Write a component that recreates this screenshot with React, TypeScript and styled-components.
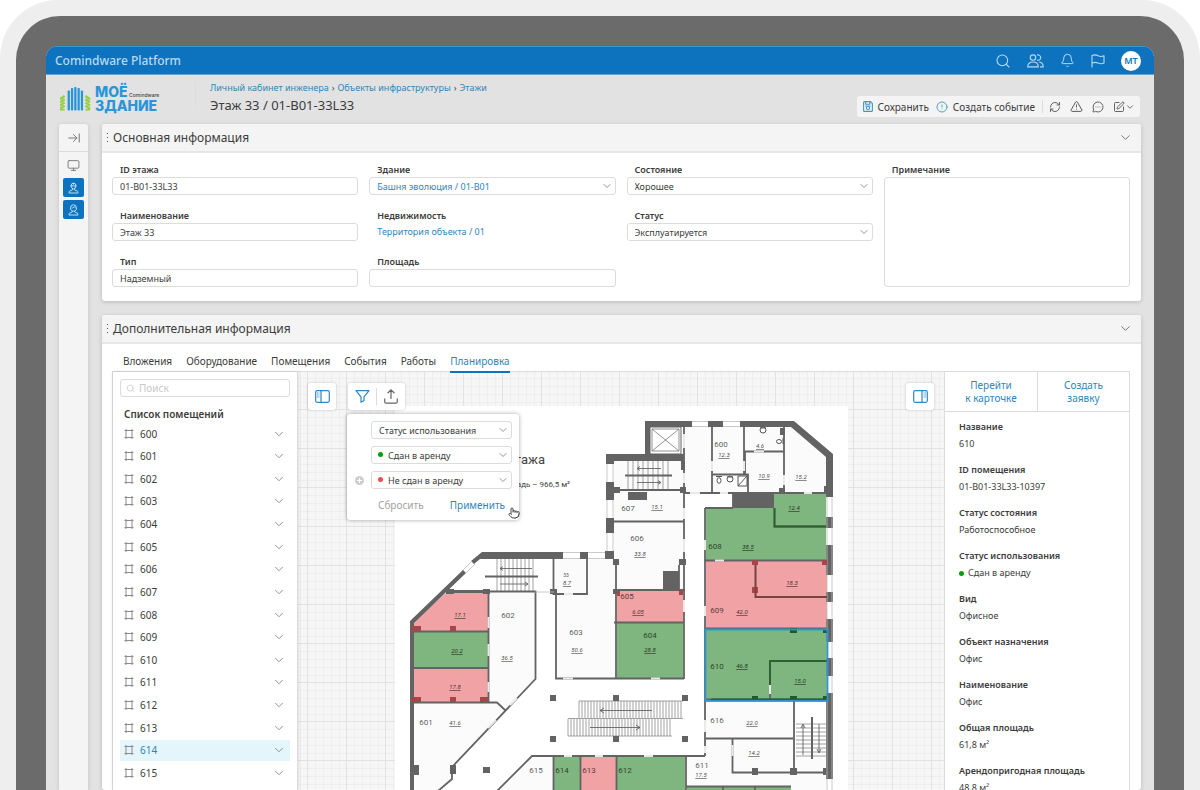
import React from "react";
import styled, { createGlobalStyle, css } from "styled-components";
import {
  Search,
  Bell,
  ArrowRightToLine,
  Monitor,
  RefreshCw,
  TriangleAlert,
  MessageCircleMore,
  SquarePen,
  ChevronDown,
  CircleAlert,
  Pointer,
} from "lucide-react";

const c = {
  brand: "#0d73be",
  link: "#2f86b8",
  text: "#3c3c3c",
  muted: "#a3a3a3",
  line: "#dcdcdc",
  head: "#f4f4f4",
  page: "#e2e2e2",
  green: "#0a9d0a",
  red: "#ee4d4d",
};

const GlobalStyle = createGlobalStyle`
  *, *::before, *::after { box-sizing: border-box; }
  body { margin: 0; background: #fff; color: ${c.text}; font-family: "Noto Sans", "Open Sans", sans-serif; font-size: 9px; }
  button, input, select, textarea { font: inherit; color: inherit; margin: 0; }
  button { border: 0; padding: 0; background: none; cursor: pointer; }
  a { color: ${c.link}; text-decoration: none; }
  h1, h2, h3, p, ul, dl, dd { margin: 0; padding: 0; font-weight: 400; }
  svg { display: block; flex: none; }
`;

/* ---------- device frame ---------- */

const Bezel = styled.div`
  height: 100vh;
  overflow: hidden;
  padding: 16px 16px 0;
  background: #eeeeee;
  border-radius: 58px 58px 0 0;
`;

const Frame = styled.div`
  height: 100%;
  padding: 30px 30px 0;
  background: #6b6b6b;
  border-radius: 44px 44px 0 0;
`;

const Screen = styled.div`
  height: 100%;
  display: flex;
  flex-direction: column;
  overflow: hidden;
  background: ${c.page};
  border-radius: 12px 12px 0 0;
`;

/* ---------- top bars ---------- */

const AppBar = styled.header`
  flex: none;
  height: 29px;
  display: flex;
  align-items: center;
  justify-content: space-between;
  padding: 0 13px 0 9px;
  background: ${c.brand};
  border-top: 1px solid #3b93d0;
  border-bottom: 1px solid #5aa6dc;
  color: #b9d9ef;
`;

const Product = styled.span`
  font-size: 12px;
  font-weight: 500;
`;

const AppActions = styled.nav`
  display: flex;
  align-items: center;
  gap: 16px;
`;

const IconButton = styled.button`
  display: flex;
  align-items: center;
  justify-content: center;
`;

const Avatar = styled.button`
  width: 20px;
  height: 20px;
  border-radius: 50%;
  background: #fff;
  color: ${c.brand};
  font-size: 9px;
  font-weight: 600;
  line-height: 20px;
  text-align: center;
`;

const TitleBar = styled.div`
  flex: none;
  height: 49px;
  display: flex;
  padding: 7px 14px 0;
`;

const LogoBox = styled.a`
  width: 135px;
  height: 32px;
`;

const TitleText = styled.div`
  flex: 1;
  padding-left: 14px;
`;

const Crumbs = styled.nav`
  display: flex;
  gap: 3px;
  line-height: 12px;
`;

const PageTitle = styled.h1`
  margin-top: 1px;
  font-size: 13px;
  line-height: 20px;
`;

const ActionBar = styled.div`
  display: flex;
  align-items: center;
  align-self: flex-start;
  height: 21px;
  margin-top: 14px;
  padding: 0 5px 0 6px;
  background: ${c.head};
  border-radius: 3px;
`;

const ActionButton = styled.button`
  display: flex;
  align-items: center;
  gap: 5px;
  margin-right: 7px;
  font-size: 10px;
`;

const Split = styled.span<{ $h: number }>`
  width: 1px;
  height: ${(p) => p.$h}px;
  background: ${c.line};
`;

const ActionIcons = styled.div`
  display: flex;
  align-items: center;
  gap: 9px;
  padding-left: 6px;
  color: #555;
`;

/* ---------- body ---------- */

const Body = styled.div`
  flex: 1;
  min-height: 0;
  display: flex;
  gap: 14px;
  padding: 0 13px;
`;

const Rail = styled.aside`
  flex: none;
  width: 29px;
  display: flex;
  flex-direction: column;
  align-items: center;
  background: ${c.head};
  border-radius: 3px 3px 0 0;
  box-shadow: 0 1px 4px rgba(0, 0, 0, 0.15);
  color: #777;
`;

const RailTop = styled.button`
  width: 100%;
  height: 28px;
  display: flex;
  align-items: center;
  justify-content: center;
  border-bottom: 1px solid ${c.line};
`;

const RailButton = styled.button<{ $filled?: boolean }>`
  width: 21px;
  height: 19px;
  margin-top: 3px;
  display: flex;
  align-items: center;
  justify-content: center;
  border-radius: 2px;
  ${(p) =>
    p.$filled
      ? css`
          background: ${c.brand};
          color: #d5e9f7;
        `
      : css`
          margin-top: 4px;
        `}
`;

const Main = styled.main`
  flex: 1;
  min-width: 0;
  display: flex;
  flex-direction: column;
  gap: 14px;
`;

const Panel = styled.section<{ $fill?: boolean }>`
  flex: ${(p) => (p.$fill ? "1" : "none")};
  min-height: 0;
  display: flex;
  flex-direction: column;
  background: #fff;
  border-radius: 3px;
  box-shadow: 0 1px 4px rgba(0, 0, 0, 0.18);
`;

const PanelHead = styled.div`
  flex: none;
  height: 29px;
  display: flex;
  align-items: center;
  padding: 0 8px 0 4px;
  background: ${c.head};
  border-bottom: 2px solid #e6e6e6;
  border-radius: 3px 3px 0 0;
`;

const PanelTitle = styled.h2`
  flex: 1;
  margin-left: 4px;
  font-size: 12px;
  line-height: 18px;
`;

const Form = styled.div`
  display: grid;
  grid-template-columns: repeat(4, 1fr);
  grid-template-rows: repeat(3, 32px);
  gap: 14px 11px;
  padding: 10px 11px 14px 10px;
`;

const Field = styled.div<{ $tall?: boolean }>`
  display: flex;
  flex-direction: column;
  ${(p) => p.$tall && css`grid-row: span 3;`}
`;

const Label = styled.label`
  flex: none;
  padding-left: 8px;
  line-height: 14px;
  font-weight: 600;
`;

const boxed = css`
  width: 100%;
  height: 18px;
  padding: 0 7px;
  border: 1px solid ${c.line};
  border-radius: 3px;
  background: #fff;
  outline: none;
`;

const TextInput = styled.input`
  ${boxed}
`;

const TextArea = styled.textarea`
  ${boxed}
  flex: 1;
  resize: none;
`;

const FieldLink = styled.a`
  padding-left: 8px;
  line-height: 18px;
`;

const SelectWrap = styled.span<{ $blue?: boolean }>`
  position: relative;
  display: block;
  flex: 1;
  color: ${(p) => (p.$blue ? c.link : c.text)};
`;

const SelectBox = styled.select<{ $dot?: boolean }>`
  ${boxed}
  display: block;
  appearance: none;
  padding-left: ${(p) => (p.$dot ? 16 : 7)}px;
`;

const SelectArrow = styled(ChevronDown)`
  position: absolute;
  right: 3px;
  top: 3px;
  color: #8a8a8a;
  pointer-events: none;
`;

const SelectDot = styled.i<{ $color: string }>`
  position: absolute;
  left: 7px;
  top: 6px;
  width: 5px;
  height: 5px;
  border-radius: 50%;
  background: ${(p) => p.$color};
`;

/* ---------- tabs and workspace ---------- */

const Tabs = styled.div`
  flex: none;
  height: 29px;
  display: flex;
  gap: 14px;
  padding: 0 21px;
`;

const Tab = styled.button<{ $active?: boolean }>`
  height: 29px;
  padding-top: 6px;
  border-bottom: 2px solid ${(p) => (p.$active ? c.brand : "transparent")};
  color: ${(p) => (p.$active ? c.link : c.text)};
  font-size: 10px;
  position: relative;
  z-index: 1;
`;

const Workspace = styled.div`
  flex: 1;
  min-height: 0;
  display: flex;
  margin: -2px 11px 0 10px;
  border: 1px solid ${c.line};
  border-bottom: 0;
`;

const Rooms = styled.div`
  flex: none;
  width: 185px;
  overflow: hidden;
  padding: 7px 7px 0 7px;
  border-right: 1px solid ${c.line};
  box-shadow: 0 0 4px rgba(0, 0, 0, 0.12);
  z-index: 1;
`;

const SearchBox = styled.label`
  ${boxed}
  display: flex;
  align-items: center;
  gap: 4px;
  padding: 0 5px;
  color: #c9c9c9;
  font-size: 10px;
`;

const SearchInput = styled.input`
  flex: 1;
  min-width: 0;
  border: 0;
  padding: 0;
  outline: none;
  background: none;
  color: ${c.text};
  &::placeholder {
    color: #c9c9c9;
    opacity: 1;
  }
`;

const RoomsTitle = styled.h3`
  margin: 10px 0 2px 4px;
  font-size: 10px;
  line-height: 14px;
  font-weight: 600;
`;

const RoomList = styled.ul`
  height: 362px;
  display: grid;
  grid-template-rows: repeat(16, 1fr);
  list-style: none;
`;

const RoomRow = styled.button<{ $selected?: boolean }>`
  width: 100%;
  height: 21px;
  display: flex;
  align-items: center;
  gap: 6px;
  padding: 0 4px;
  background: ${(p) => (p.$selected ? "#e5f5fc" : "transparent")};
  color: ${(p) => (p.$selected ? c.link : c.text)};
  font-size: 10px;
  text-align: left;
`;

const RoomName = styled.span`
  flex: 1;
`;

const Canvas = styled.div`
  position: relative;
  flex: 1;
  min-width: 0;
  display: flex;
  justify-content: center;
  align-items: flex-start;
  overflow: hidden;
  padding-top: 34px;
  background-color: #f6f6f6;
  background-image: linear-gradient(90deg, #e2e2e2 1px, transparent 1px),
    linear-gradient(#e2e2e2 1px, transparent 1px),
    repeating-linear-gradient(90deg, #eeeeee 0 1px, transparent 1px 8px),
    repeating-linear-gradient(#eeeeee 0 1px, transparent 1px 8px);
  background-size: 39px 39px;
  background-position: 9px 37px;
`;

const Tools = styled.div<{ $side: "left" | "right" }>`
  position: absolute;
  top: 11px;
  ${(p) => p.$side}: 10px;
  display: flex;
  gap: 12px;
`;

const ToolGroup = styled.div`
  height: 27px;
  display: flex;
  align-items: center;
  background: #fff;
  border-radius: 3px;
  box-shadow: 0 0 3px rgba(0, 0, 0, 0.2);
`;

const ToolButton = styled(IconButton)<{ $blue?: boolean }>`
  width: 28px;
  height: 27px;
  color: ${(p) => (p.$blue ? "#2c88c4" : "#666")};
`;

const FilterCard = styled.form`
  position: absolute;
  left: 49px;
  top: 42px;
  width: 172px;
  padding: 7px 7px 6px 8px;
  display: flex;
  flex-direction: column;
  gap: 7px;
  background: #fff;
  border-radius: 3px;
  box-shadow: 0 0 4px rgba(0, 0, 0, 0.35);
`;

const FilterRow = styled.div`
  display: flex;
  align-items: center;
`;

const FilterSlot = styled.div`
  width: 16px;
`;

const AddButton = styled.button`
  width: 9px;
  height: 9px;
  display: flex;
  align-items: center;
  justify-content: center;
  border-radius: 50%;
  background: #cdcdcd;
  color: #fff;
`;

const FilterFoot = styled.div`
  display: flex;
  justify-content: space-between;
  padding: 0 7px 0 23px;
`;

const FilterButton = styled.button<{ $primary?: boolean }>`
  color: ${(p) => (p.$primary ? c.link : c.muted)};
  font-size: 10px;
  line-height: 18px;
`;

const HandCursor = styled(Pointer)`
  position: absolute;
  left: 210px;
  top: 135px;
  fill: #fff;
  color: #444;
`;

const Details = styled.aside`
  flex: none;
  width: 185px;
  overflow: hidden;
  background: #fff;
  border-left: 1px solid ${c.line};
`;

const DetailLinks = styled.div`
  display: grid;
  grid-template-columns: 1fr 1fr;
  height: 40px;
  border-bottom: 1px solid ${c.line};
`;

const DetailLink = styled.a`
  display: flex;
  align-items: center;
  justify-content: center;
  text-align: center;
  font-size: 10px;
  line-height: 13px;
  white-space: pre-line;
  & + & {
    border-left: 1px solid ${c.line};
  }
`;

const DetailList = styled.dl`
  padding: 8px 14px 0;
`;

const DetailItem = styled.div`
  height: 43px;
`;

const DetailTerm = styled.dt`
  line-height: 13px;
  font-weight: 600;
`;

const DetailValue = styled.dd`
  display: flex;
  align-items: center;
  gap: 4px;
  margin-top: 4px;
  line-height: 14px;
`;

const Dot = styled.i<{ $color: string }>`
  width: 5px;
  height: 5px;
  border-radius: 50%;
  background: ${(p) => p.$color};
`;

/* ---------- drawings ---------- */

const Logo = () => (
  <svg width="104" height="32" viewBox="0 0 104 32" aria-label="Моё здание">
    <g fill="#2a95d8">
      {[
        [7.6, 8.4],
        [10.9, 6],
        [14.2, 5],
        [17.5, 6],
        [20.8, 8.4],
      ].map(([x, y]) => (
        <rect key={x} x={x} y={y} width="2.3" height={28.5 - y} rx="0.8" />
      ))}
    </g>
    <g stroke="#93cf45" strokeWidth="2.3">
      {[14.4, 17.6, 20.8, 24].map((y) => (
        <g key={y}>
          <path d={`M0 ${y + 2.8}L4.6 ${y - 0.4}`} />
          <path d={`M30 ${y + 2.8}L25.4 ${y - 0.4}`} />
        </g>
      ))}
      <path d="M0 27.6H4.600M25.400 27.600H30" strokeWidth="1.8" />
    </g>
    <g fill="#2a95d8" fontFamily="Inter, sans-serif" fontWeight="800" fontSize="14">
      <text x="35" y="15">МОЁ</text>
      <text x="35" y="29">ЗДАНИЕ</text>
    </g>
    <text x="69" y="15" fontFamily="Inter, sans-serif" fontSize="5" fontWeight="500" fill="#444">
      Comindware
    </text>
  </svg>
);

const FlagIcon = () => (
  <svg width="14" height="14" viewBox="0 0 14 14" fill="none" stroke="currentColor" strokeWidth="1.1">
    <path d="M1 13.500V1.600C3 .6 5 .7 7 1.700S11 2.700 13 1.700V9C11 10 9 9.900 7 9S3 8.200 1 9.200" strokeLinejoin="round" />
  </svg>
);

const PeopleIcon = () => (
  <svg width="17" height="14" viewBox="0 0 17 14" fill="none" stroke="currentColor" strokeWidth="1.1">
    <circle cx="6" cy="3.600" r="2.700" />
    <path d="M.7 12.900c0-3.200 2-4.900 5.300-4.900s5.300 1.700 5.300 4.900Z" strokeLinejoin="round" />
    <path d="M10 1.100a2.700 2.700 0 1 1 0 5M12.200 8c2.600.3 4 2 4 4.900H13" strokeLinejoin="round" />
  </svg>
);

const SaveIcon = () => (
  <svg width="10" height="11" viewBox="0 0 10 11" fill="none" stroke="#3f97c0" strokeWidth="1.1">
    <path d="M.6 1.600a1 1 0 0 1 1-1H7.400L9.400 2.600V9.400a1 1 0 0 1-1 1H1.600a1 1 0 0 1-1-1Z" />
    <path d="M2.600.8V3.200H6.800V.8" />
    <circle cx="5" cy="6.900" r="1.600" />
    <path d="M2 5h6" strokeWidth=".7" />
  </svg>
);

const DotsHandle = () => (
  <svg width="3" height="9" viewBox="0 0 3 9" fill="#555" shapeRendering="crispEdges">
    <path d="M1 0h1v1H1zM1 4h1v1H1zM1 8h1v1H1z" />
  </svg>
);

const WorkerIcon = ({ headset = false }: { headset?: boolean }) => (
  <svg width="11" height="12" viewBox="0 0 11 12" fill="none" stroke="currentColor" strokeWidth="0.9">
    {headset ? (
      <path d="M2.600 5V3.700a2.900 2.900 0 0 1 5.800 0V5c0 1.200-1 2-2.900 2S2.600 6.200 2.600 5M3.600 4c1.400 0 2.400-.6 2.800-1.400.3.700.7 1.200 1.200 1.400" />
    ) : (
      <path d="M2.200 3.900h6.600M3 3.800a2.500 2.600 0 0 1 5 0M5.500 1V2.600M3.500 4v.8a2 2.100 0 0 0 4 0V4" />
    )}
    <path d="M4.400 7.200v.8L1.800 9c-.6.300-.8.800-.8 2h9c0-1.200-.2-1.700-.8-2L6.600 8v-.8" />
  </svg>
);

const RoomIcon = () => (
  <svg width="10" height="10" viewBox="0 0 10 10" fill="none" stroke="#8b8b8b" strokeWidth="1">
    <path d="M.5 1.500H9.500M.5 8.500H9.500M2 0V10M8 0V10" />
  </svg>
);

const SidePanelIcon = ({ flip = false }: { flip?: boolean }) => (
  <svg width="15" height="13" viewBox="0 0 15 13" fill="none" stroke="currentColor" strokeWidth="1.2">
    <g transform={flip ? "translate(15 0) scale(-1 1)" : undefined}>
      <rect x=".7" y=".7" width="13.600" height="11.600" rx="1.500" />
      <path d="M6 .7V12.300" />
      <path d="M2.200 3h2.200M2.200 5h2.200M2.200 7h2.200" strokeWidth="1" strokeDasharray="1 .4" />
    </g>
  </svg>
);

const FunnelIcon = () => (
  <svg width="15" height="13" viewBox="0 0 15 13" fill="none" stroke="currentColor" strokeWidth="1.200">
    <path d="M1 .7H14L9 6.900V10.400L6 12.300V6.900Z" strokeLinejoin="round" />
  </svg>
);

const UploadIcon = () => (
  <svg width="14" height="15" viewBox="0 0 14 15" fill="none" stroke="currentColor" strokeWidth="1.200">
    <path d="M7 10V1M3.600 4.200L7 .9 10.400 4.200M.7 9.500V12.700a1.400 1.400 0 0 0 1.400 1.400H11.900a1.400 1.400 0 0 0 1.400-1.400V9.500" />
  </svg>
);

/* ---------- floor plan ---------- */

const WALL = "#636363";
const GREEN = "#7fb57e";
const PINK = "#f1a2a4";

const fills: [string, string][] = [
  ["#fbfbfb", "M614 461H683V427H712V493H684V590H616V559H614Z"],
  ["#fbfbfb", "M713 427H794L826 457V493H713Z"],
  ["#fbfbfb", "M555 559H605H614V590H616V678H556V594H555Z"],
  ["#fbfbfb", "M489 593H535V679L505 710 497 702H489Z"],
  ["#fbfbfb", "M411 703H497L505 710 452 765V778L439 790H411Z"],
  ["#fbfbfb", "M706 702H794V738H826V790H686V756H706Z"],
  ["#fbfbfb", "M532 756H553V790H498Z"],
  [GREEN, "M706 508H774V494H826V560H706Z"],
  [PINK, "M706 561H827V628H706Z"],
  [GREEN, "M706 630H827V700H706Z"],
  [PINK, "M617 591H683V622H617Z"],
  [GREEN, "M617 623H683V678H617Z"],
  [PINK, "M446 593H488V631H411V623Z"],
  [GREEN, "M411 632H488V667H411Z"],
  [PINK, "M411 669H488V702H411Z"],
  [GREEN, "M617 757H685V790H617Z"],
  [PINK, "M581 757H616V790H581Z"],
  [GREEN, "M554 757H580V790H554Z"],
  [GREEN, "M687 787H791V790H687Z"],
];

const solids = [
  "M645 421H692V427H650V461H606V454H645Z",
  "M708 421H723V427H708ZM740 421H794L833 454V497H826V457L791 427H740Z",
  "M826 517H833V528H826ZM826 545H833V575H826ZM826 592H833V602H826ZM826 619H833V642H826ZM826 658H833V676H826ZM826 693H833V779H826Z",
  "M650 454H684V461H650Z",
  "M606 454H614V464H606ZM606 482H614V500H606ZM606 518H614V533H606ZM605 551H614V559H605Z",
  "M482 552H563V559H480L474 564 471 561ZM580 552H588V559H580Z",
  "M463 570L466 573 414 623V790H410V621Z",
  "M628 492H647V500H628ZM663 571H679V590H663ZM733 494H774V508H733Z",
  "M614 487H620V493H614ZM680 487H686V493H680ZM681 461H685V470H681ZM613 559H619V565H613ZM679 559H686V565H679Z",
  "M780 428H785V435H780ZM779 488H785V493H779ZM824 486H829V494H824Z",
  "M446 589H454V594H446ZM483 589H490V594H483ZM550 589H557V594H550ZM613 589H618V594H613Z",
  "M550 695H556V701H550ZM613 695H619V701H613ZM682 695H688V701H682ZM550 736H556V742H550ZM613 736H619V742H613ZM682 736H688V742H682ZM483 767H490V773H483Z",
  "M410 765H419V775H410ZM450 765H456V774H450ZM752 768H758V775H752ZM790 768H797V775H790ZM823 768H827V775H823Z",
];

const walls = [
  "M684 427V590M614 490H684M614 521.500H684M616 565V678M679 565V590M614 590H685M614 622.500H684M616 678.500H684M684 590V679",
  "M712 427V493M744 427V474M712 474.500H748V493M744 451.500H784M745 451V474M784 427V493M684 493H733M733 493H826M733 493V508M705 508H733",
  "M705 508V756M705 560.500H826M705 628.500H826M774.500 508V526.500H826M755.500 561V597H827M770 699V661H827M706 699.500H826",
  "M706 738.500H793M794 700V773M732.500 739V772.500H827M705 756H532L497 791M686 756V790M686 786.500H791M723 786V790M755 786V790",
  "M553.500 756V790M580.500 756V790M616.500 756V790",
  "M553.500 559V594H587V559M556 594V678.500H616M454 591.500H535.500V679L452 767M452 774V779L438 791",
  "M488.500 593V702M411 631.500H489M411 668H489M411 702.500H497L505 710",
];

const gaps =
  "M684 434V448M684 473V483M684 508V519M684 539V552M712 461V471M744 461V471M784 475V485M684 600V612M705 540V550M705 606V616M705 720V732M705 746V753M488.500 617V628M488.500 644V656M488.500 682V692M510 705L517 698M488 728L496 720M563 678.500H573M651 678.500H660M690 493H700M720 493H728M804 493H812M715 560.500H724M564 594H573M564 756H572M595 756H603M644 756H653M754 451.500H764M732.500 745V756M770 685V694";

const range = (from: number, to: number, step: number) => {
  const out: number[] = [];
  for (let v = from; v <= to; v += step) out.push(v);
  return out;
};

const stairs = [
  ...range(628, 668, 5).map((x) => `M${x} 461V489`),
  ...range(497, 536, 4).map((x) => `M${x} 559V591`),
  ...range(579, 683, 3).map((x) => `M${x} 701V718`),
  ...range(568, 672, 3).map((x) => `M${x} 719V736`),
  ...range(724, 756, 4).map((y) => `M796 ${y}H826`),
  "M579 701H683M568 718.500H683M568 736H672",
].join("");

const arrows =
  "M661 468.500H638M640 466.500L637 468.500 640 470.500M637 482.500H660M658 480.500L661 482.500 658 484.500M532 568.500H500M503 566.500L500 568.500 503 570.500M500 584H528M525 582L528 584 525 586M652 710.500H600M604 708L600 710.500 604 713M590 727.500H640M636 725L640 727.500 636 730M803 755V725M801 728L803 724 805 728M819 724V752M817 749L819 753 821 749";

const roomNumbers: [number, number, string][] = [
  [721, 447, "600"],
  [628, 511, "607"],
  [637, 541, "606"],
  [715, 549, "608"],
  [627, 599, "605"],
  [717, 613, "609"],
  [650, 638, "604"],
  [508, 618, "602"],
  [576, 635, "603"],
  [717, 669, "610"],
  [426, 725, "601"],
  [717, 723, "616"],
  [702, 768, "611"],
  [536, 773, "615"],
  [562, 773, "614"],
  [589, 773, "613"],
  [625, 773, "612"],
];

const areas: [number, number, string][] = [
  [724, 457, "12.3"],
  [760, 448, "4.6"],
  [764, 478, "10.9"],
  [801, 479, "15.2"],
  [657, 509, "15.1"],
  [640, 556, "33.8"],
  [794, 510, "12.4"],
  [748, 549, "38.5"],
  [792, 585, "18.3"],
  [638, 614, "6.05"],
  [742, 614, "42.0"],
  [650, 652, "28.8"],
  [742, 668, "46.8"],
  [800, 683, "15.0"],
  [567, 585, "8.7"],
  [460, 617, "17.1"],
  [457, 653, "20.2"],
  [455, 689, "17.8"],
  [507, 660, "36.5"],
  [577, 652, "50.6"],
  [455, 725, "41.6"],
  [752, 725, "22.0"],
  [754, 755, "14.2"],
  [701, 777, "17.5"],
];

const PlanNumber = styled.text`
  font: 400 8px Roboto, sans-serif;
  fill: rgba(0, 0, 0, 0.68);
  text-anchor: middle;
`;

const PlanArea = styled.text`
  font: italic 400 6px Roboto, sans-serif;
  fill: rgba(0, 0, 0, 0.75);
  text-anchor: middle;
  text-decoration: underline;
`;

const PlanCaption = styled.text<{ $size: number }>`
  font: 400 ${(p) => p.$size}px Roboto, sans-serif;
  fill: #444;
  text-anchor: end;
`;

const FloorPlan = () => (
  <svg width="453" height="384" viewBox="395 406 453 384" role="img" aria-label="План этажа">
    <rect x="395" y="406" width="453" height="384" fill="#fff" />
    {fills.map(([fill, d]) => (
      <path key={d} d={d} fill={fill} />
    ))}
    <path d={stairs} stroke="#8a8a8a" strokeWidth="0.8" fill="none" />
    <path d={arrows} stroke="#555" strokeWidth="0.8" fill="none" />
    <path d="M625 475.500H672M485 576.500H538M812 717V759" stroke={WALL} strokeWidth="2" />
    <path d={walls.join("")} stroke={WALL} strokeWidth="1.800" fill="none" />
    <path d="M454 591.500H490" stroke={WALL} strokeWidth="3" />
    <path d={gaps} stroke="#e9e9e9" strokeWidth="2" />
    <path d={solids.join("")} fill={WALL} />
    <path
      d="M692 421.500H708M692 426.500H708M723 421.500H740M723 426.500H740M563 552.500H580M563 558.500H580M588 552.500H605M588 558.500H605M607 464V482M613 464V482M607 500V518M613 500V518M607 533V551M613 533V551M827 497V790M832 497V790M463 570L472 561M466 573L475 564M535 592H554"
      stroke="#bdbdbd"
      strokeWidth="0.800"
    />
    {/* lift shaft */}
    <path d="M650 427H681V454H650Z" fill="#fff" stroke={WALL} strokeWidth="1" />
    <path d="M652 429H679V451H652ZM652 429L679 451M679 429L652 451" fill="none" stroke="#777" strokeWidth="0.800" />
    {/* sanitary fixtures */}
    <g fill="#fff" stroke="#555" strokeWidth="1">
      <circle cx="763" cy="430" r="3" />
      <path d="M760 428H766" />
      <ellipse cx="779" cy="441.500" rx="2.500" ry="2" />
      <path d="M783 438V444" />
      <ellipse cx="719" cy="480.500" rx="2" ry="2.800" />
      <path d="M716 476.500H722" />
      <circle cx="730" cy="479" r="3" />
      <path d="M727 477H733M738 476H747V486H738ZM738 486L747 476" />
    </g>
    {/* columns inside the coloured rooms */}
    <path
      d="M411 626H421V631H411ZM450 626H456V631H450ZM411 697H421V702H411ZM450 697H456V702H450ZM480 697H488V702H480ZM752 560H758V565H752ZM752 587H758V593H752ZM822 560H827V565H822ZM617 591H620V596H617ZM679 590H683V595H679Z"
      fill="#a54648"
    />
    <path
      d="M790 628H797V633H790ZM752 696H758V700H752ZM790 696H797V700H790ZM823 696H827V700H823ZM823 629H827V633H823Z"
      fill="#1f5a2a"
    />
    <path d="M774.500 508V526.500H826M770 685V661H827M711 699.500H826" stroke="#2b612f" strokeWidth="1.800" fill="none" />
    <path d="M755.500 565V597H827" stroke="#84393b" strokeWidth="1.500" fill="none" />
    <rect x="705.500" y="629.500" width="122" height="71.500" fill="none" stroke="#2b95d6" strokeWidth="1.800" />
    {roomNumbers.map(([x, y, t]) => (
      <PlanNumber key={t} x={x} y={y}>{t}</PlanNumber>
    ))}
    {areas.map(([x, y, t]) => (
      <PlanArea key={`${x}-${y}`} x={x} y={y}>{t}</PlanArea>
    ))}
    <text x="566" y="577" fontSize="5" fontFamily="Roboto, sans-serif" textAnchor="middle" fill="#555">33</text>
    <PlanCaption x="545" y="464" $size={13}>этажа</PlanCaption>
    <PlanCaption x="570" y="487" $size={8}>площадь – 966,5 м²</PlanCaption>
  </svg>
);

/* ---------- composed parts ---------- */

type SelectProps = { id?: string; value: string; blue?: boolean; dot?: string; label?: string };

const Select = ({ id, value, blue, dot, label }: SelectProps) => (
  <SelectWrap $blue={blue}>
    <SelectBox id={id} aria-label={label} defaultValue={value} $dot={!!dot}>
      <option>{value}</option>
    </SelectBox>
    {dot && <SelectDot $color={dot} />}
    <SelectArrow size={12} strokeWidth={1.8} />
  </SelectWrap>
);

const PanelHeader = ({ title }: { title: string }) => (
  <PanelHead>
    <DotsHandle />
    <PanelTitle>{title}</PanelTitle>
    <IconButton aria-label="Свернуть">
      <ChevronDown size={15} strokeWidth={1.6} color="#777" />
    </IconButton>
  </PanelHead>
);

const tabs = ["Вложения", "Оборудование", "Помещения", "События", "Работы", "Планировка"];
const rooms = Array.from({ length: 16 }, (_, i) => String(600 + i));

const details: [string, string, string?][] = [
  ["Название", "610"],
  ["ID помещения", "01-B01-33L33-10397"],
  ["Статус состояния", "Работоспособное"],
  ["Статус использования", "Сдан в аренду", c.green],
  ["Вид", "Офисное"],
  ["Объект назначения", "Офис"],
  ["Наименование", "Офис"],
  ["Общая площадь", "61,8 м²"],
  ["Арендопригодная площадь", "48,8 м²"],
];

export default function App() {
  return (
    <>
      <GlobalStyle />
      <Bezel>
        <Frame>
          <Screen>
            <AppBar>
              <Product>Comindware Platform</Product>
              <AppActions>
                <IconButton aria-label="Поиск"><Search size={16} strokeWidth={1.6} /></IconButton>
                <IconButton aria-label="Пользователи"><PeopleIcon /></IconButton>
                <IconButton aria-label="Уведомления"><Bell size={15} strokeWidth={1.6} /></IconButton>
                <IconButton aria-label="Задачи"><FlagIcon /></IconButton>
                <Avatar>MT</Avatar>
              </AppActions>
            </AppBar>

            <TitleBar>
              <LogoBox href="#" aria-label="Моё здание"><Logo /></LogoBox>
              <Split $h={24} />
              <TitleText>
                <Crumbs>
                  <a href="#">Личный кабинет инженера</a>
                  <span>›</span>
                  <a href="#">Объекты инфраструктуры</a>
                  <span>›</span>
                  <a href="#">Этажи</a>
                </Crumbs>
                <PageTitle>Этаж 33 / 01-B01-33L33</PageTitle>
              </TitleText>
              <ActionBar>
                <ActionButton><SaveIcon />Сохранить</ActionButton>
                <ActionButton><CircleAlert size={12} strokeWidth={1.8} color="#3f97c0" />Создать событие</ActionButton>
                <Split $h={13} />
                <ActionIcons>
                  <IconButton aria-label="Обновить"><RefreshCw size={12} strokeWidth={1.8} /></IconButton>
                  <IconButton aria-label="Предупреждения"><TriangleAlert size={13} strokeWidth={1.8} /></IconButton>
                  <IconButton aria-label="Комментарии"><MessageCircleMore size={12} strokeWidth={1.8} /></IconButton>
                  <IconButton aria-label="Правка">
                    <SquarePen size={12} strokeWidth={1.8} />
                    <ChevronDown size={10} strokeWidth={2} />
                  </IconButton>
                </ActionIcons>
              </ActionBar>
            </TitleBar>

            <Body>
              <Rail>
                <RailTop aria-label="Развернуть меню"><ArrowRightToLine size={14} strokeWidth={1.7} /></RailTop>
                <RailButton aria-label="Рабочий стол"><Monitor size={13} strokeWidth={1.7} /></RailButton>
                <RailButton $filled aria-label="Инженер"><WorkerIcon /></RailButton>
                <RailButton $filled aria-label="Диспетчер"><WorkerIcon headset /></RailButton>
              </Rail>

              <Main>
                <Panel>
                  <PanelHeader title="Основная информация" />
                  <Form>
                    <Field>
                      <Label htmlFor="floor-id">ID этажа</Label>
                      <TextInput id="floor-id" defaultValue="01-B01-33L33" />
                    </Field>
                    <Field>
                      <Label htmlFor="building">Здание</Label>
                      <Select id="building" value="Башня эволюция / 01-B01" blue />
                    </Field>
                    <Field>
                      <Label htmlFor="condition">Состояние</Label>
                      <Select id="condition" value="Хорошее" />
                    </Field>
                    <Field $tall>
                      <Label htmlFor="note">Примечание</Label>
                      <TextArea id="note" />
                    </Field>
                    <Field>
                      <Label htmlFor="name">Наименование</Label>
                      <TextInput id="name" defaultValue="Этаж 33" />
                    </Field>
                    <Field>
                      <Label as="span">Недвижимость</Label>
                      <FieldLink href="#">Территория объекта / 01</FieldLink>
                    </Field>
                    <Field>
                      <Label htmlFor="status">Статус</Label>
                      <Select id="status" value="Эксплуатируется" />
                    </Field>
                    <Field>
                      <Label htmlFor="type">Тип</Label>
                      <TextInput id="type" defaultValue="Надземный" />
                    </Field>
                    <Field>
                      <Label htmlFor="area">Площадь</Label>
                      <TextInput id="area" />
                    </Field>
                  </Form>
                </Panel>

                <Panel $fill>
                  <PanelHeader title="Дополнительная информация" />
                  <Tabs role="tablist">
                    {tabs.map((t) => (
                      <Tab key={t} role="tab" $active={t === "Планировка"} aria-selected={t === "Планировка"}>
                        {t}
                      </Tab>
                    ))}
                  </Tabs>
                  <Workspace>
                    <Rooms>
                      <SearchBox>
                        <Search size={9} strokeWidth={2} />
                        <SearchInput placeholder="Поиск" aria-label="Поиск" />
                      </SearchBox>
                      <RoomsTitle>Список помещений</RoomsTitle>
                      <RoomList>
                        {rooms.map((r) => (
                          <li key={r}>
                            <RoomRow $selected={r === "614"}>
                              <RoomIcon />
                              <RoomName>{r}</RoomName>
                              <ChevronDown size={14} strokeWidth={1.6} color="#8a8a8a" />
                            </RoomRow>
                          </li>
                        ))}
                      </RoomList>
                    </Rooms>

                    <Canvas>
                      <FloorPlan />
                      <Tools $side="left">
                        <ToolGroup>
                          <ToolButton $blue aria-label="Список помещений"><SidePanelIcon /></ToolButton>
                        </ToolGroup>
                        <ToolGroup>
                          <ToolButton $blue aria-label="Фильтр"><FunnelIcon /></ToolButton>
                          <Split $h={17} />
                          <ToolButton aria-label="Выгрузить"><UploadIcon /></ToolButton>
                        </ToolGroup>
                      </Tools>
                      <Tools $side="right">
                        <ToolGroup>
                          <ToolButton $blue aria-label="Карточка помещения"><SidePanelIcon flip /></ToolButton>
                        </ToolGroup>
                      </Tools>
                      <FilterCard onSubmit={(e) => e.preventDefault()}>
                        <FilterRow>
                          <FilterSlot />
                          <Select value="Статус использования" label="Поле" />
                        </FilterRow>
                        <FilterRow>
                          <FilterSlot />
                          <Select value="Сдан в аренду" label="Значение 1" dot={c.green} />
                        </FilterRow>
                        <FilterRow>
                          <FilterSlot>
                            <AddButton type="button" aria-label="Добавить">
                              <svg width="5" height="5" viewBox="0 0 5 5" stroke="currentColor">
                                <path d="M2.500 0V5M0 2.500H5" />
                              </svg>
                            </AddButton>
                          </FilterSlot>
                          <Select value="Не сдан в аренду" label="Значение 2" dot={c.red} />
                        </FilterRow>
                        <FilterFoot>
                          <FilterButton type="reset">Сбросить</FilterButton>
                          <FilterButton type="submit" $primary>Применить</FilterButton>
                        </FilterFoot>
                      </FilterCard>
                      <HandCursor size={12} strokeWidth={2} />
                    </Canvas>

                    <Details>
                      <DetailLinks>
                        <DetailLink href="#">{"Перейти\nк карточке"}</DetailLink>
                        <DetailLink href="#">{"Создать\nзаявку"}</DetailLink>
                      </DetailLinks>
                      <DetailList>
                        {details.map(([term, value, color]) => (
                          <DetailItem key={term}>
                            <DetailTerm>{term}</DetailTerm>
                            <DetailValue>
                              {color && <Dot $color={color} />}
                              {value}
                            </DetailValue>
                          </DetailItem>
                        ))}
                      </DetailList>
                    </Details>
                  </Workspace>
                </Panel>
              </Main>
            </Body>
          </Screen>
        </Frame>
      </Bezel>
    </>
  );
}
